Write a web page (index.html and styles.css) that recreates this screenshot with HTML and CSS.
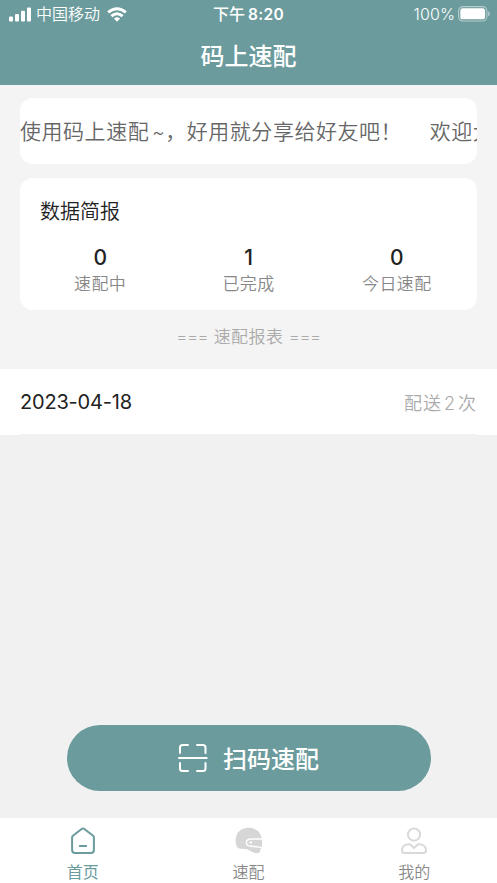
FILE: index.html
```
<!DOCTYPE html>
<html lang="zh-CN">
<head>
<meta charset="utf-8">
<meta name="viewport" content="width=device-width, initial-scale=1">
<title>码上速配</title>
<link rel="stylesheet" href="styles.css">
</head>
<body>
<div class="app">
  <header class="header">
    <div class="status">
      <div class="status-left">
        <svg class="signal" width="23" height="15" viewBox="0 0 23 15" fill="#fff"><rect x="0" y="9.5" width="4" height="5" rx="1"/><rect x="6" y="7" width="4" height="7.5" rx="1"/><rect x="12" y="3.8" width="4" height="10.7" rx="1"/><rect x="18" y="0.5" width="4" height="14" rx="1"/></svg>
        <span class="carrier">中国移动</span>
        <svg class="wifi" width="20" height="15" viewBox="0 0 20 15" fill="none" stroke="#fff" stroke-width="3"><path d="M1.2 5.4Q10-2 18.8 5.4"/><path d="M4.4 9.2Q10 4.4 15.6 9.2"/><path d="M10 14.7 6.9 11.6Q10 9 13.1 11.6Z" fill="#fff" stroke="none"/></svg>
      </div>
      <div class="clock"><span>下午</span><span class="time">8:20</span></div>
      <div class="status-right">
        <span class="percent">100%</span>
        <svg class="battery" width="32" height="16" viewBox="0 0 32 16"><rect x=".6" y=".6" width="28.3" height="14.4" rx="4.3" fill="none" stroke="#fff" stroke-opacity=".5" stroke-width="1.1"/><rect x="2.3" y="2.3" width="24.8" height="11" rx="2.6" fill="#fff"/><path d="M30.2 5.3Q31.8 6 31.8 7.8T30.2 10.3Z" fill="#fff" fill-opacity=".55"/></svg>
      </div>
    </div>
    <h1 class="title">码上速配</h1>
  </header>
  <main class="main">
    <section class="notice">
      <span>使用码上速配<span class="tilde">~</span>，好用就分享给好友吧！</span><span>欢迎大</span>
    </section>
    <section class="summary">
      <h2 class="summary-title">数据简报</h2>
      <div class="stats">
        <div class="stat"><span class="value">0</span><span class="label">速配中</span></div>
        <div class="stat"><span class="value">1</span><span class="label">已完成</span></div>
        <div class="stat"><span class="value">0</span><span class="label">今日速配</span></div>
      </div>
    </section>
    <div class="report-title"><span class="rule">===</span><span>速配报表</span><span class="rule">===</span></div>
    <div class="record"><div class="record-row"><span class="date">2023-04-18</span><span class="count">配送<span class="num">2</span>次</span></div></div>
    <button class="scan">
      <svg width="30" height="30" viewBox="0 0 30 30" fill="none" stroke="#fff" stroke-width="2" stroke-linecap="round" stroke-linejoin="round"><path d="M2 10V4.5Q2 2 4.5 2H10M19 2H25Q27.5 2 27.5 4.5V10M2 20V25.5Q2 28 4.5 28H10M19 28H25Q27.5 28 27.5 25.5V20M1 15H28.7"/></svg>
      <span>扫码速配</span>
    </button>
  </main>
  <nav class="tabs">
    <a class="tab active">
      <svg width="28" height="28" viewBox="0 0 28 28" fill="none" stroke="#6b9b9d" stroke-width="2" stroke-linejoin="round" stroke-linecap="round"><path d="M3.1 10.4Q3.1 9.5 3.9 8.8L12.6 2Q14 1 15.4 2L24.1 8.8Q24.9 9.5 24.9 10.4V23Q24.9 26 21.9 26H6.1Q3.1 26 3.1 23ZM10.8 19H17.2"/></svg>
      <span>首页</span>
    </a>
    <a class="tab">
      <svg width="28" height="28" viewBox="0 0 28 28"><path d="M2.2 20.5C-1 13 .6 6 6.5 2.5C13.5-1 23.5.6 26.3 9.4L27 12V20.8L25.6 21.5Q25.6 26.4 21.8 26.3C17.4 26.2 15.6 23.2 11.8 22.3C8.4 21.5 4.8 22.4 2.2 20.5Z" fill="#d6d6d6"/><path d="M28 12H16C10 12 10 18.6 15 19L28 20.6" fill="none" stroke="#fff" stroke-width="1.4"/><circle cx="15.8" cy="15.5" r="1.3" fill="#fff"/></svg>
      <span>速配</span>
    </a>
    <a class="tab">
      <svg width="28" height="28" viewBox="0 0 28 28" fill="none" stroke="#d9d9d9" stroke-width="2" stroke-linejoin="round"><circle cx="14" cy="7.6" r="6.1"/><path d="M9 17.2Q10 17.2 10.8 18L14 20.9L17.2 18Q18 17.2 19 17.2C23.3 17.2 26 20 26 23.6Q26 26 23.6 26H4.4Q2 26 2 23.6C2 20 4.7 17.2 9 17.2Z"/></svg>
      <span>我的</span>
    </a>
  </nav>
</div>
</body>
</html>
```
FILE: styles.css
```
* { box-sizing: border-box; }
body {
  margin: 0;
  font-family: Inter, "Noto Sans CJK SC", sans-serif;
  color: #222;
  background: #f1f1f1;
}
h1, h2 { margin: 0; font-weight: 500; }
svg { display: block; flex: none; }
.app { height: 883px; display: flex; flex-direction: column; overflow: hidden; }
.header { height: 85px; background: #6b9b9d; color: #fff; flex: none; }
.status {
  height: 27px;
  display: grid;
  grid-template-columns: 1fr auto 1fr;
  align-items: center;
  padding: 0 7px 0 9px;
  font-size: 16px;
  line-height: 27px;
}
.status-left, .status-right { display: flex; align-items: center; }
.carrier { margin: 1px 7px 0 4px; font-weight: 350; }
.status-right { justify-content: flex-end; gap: 3px; }
.percent { font-weight: 350; letter-spacing: .1px; padding-top: 1px; }
.clock { display: flex; gap: 3px; font-weight: 500; margin-right: 2px; padding-top: 1px; }
.time { font-weight: 600; font-size: 15.5px; letter-spacing: .35px; }
.title { text-align: center; font-size: 24px; line-height: 58px; padding-top: 1px; }
.main { flex: 1; display: flex; flex-direction: column; padding-top: 13px; background: linear-gradient(#f4f4f4 284px, #f1f1f1 350px); }
.notice {
  height: 66px;
  margin: 0 20px;
  border-radius: 13px;
  background: #fff;
  overflow: hidden;
  display: flex;
  gap: 27.5px;
  white-space: nowrap;
  font-size: 21px;
  font-weight: 350;
  letter-spacing: .54px;
  line-height: 68px;
  color: #666;
}
.tilde { margin: 0 0 0 3px; font-size: 19px; }
.summary { height: 132px; margin: 14px 20px 0; border-radius: 13px; background: #fff; padding: 19px 0 0; }
.summary-title { margin-left: 20px; font-size: 20px; font-weight: 350; line-height: 30px; }
.stats { display: flex; padding: 18px 6px 0; }
.stat { flex: 1; display: flex; flex-direction: column; align-items: center; }
.value { font-size: 21px; line-height: 25px; font-weight: 500; }
.label { font-size: 17px; font-weight: 350; letter-spacing: .4px; line-height: 28px; color: #888; }
.report-title { height: 59px; display: flex; justify-content: center; gap: 5.5px; font-size: 17px; font-weight: 350; letter-spacing: .4px; line-height: 55px; color: #aaa; }
.rule { letter-spacing: -.5px; }
.record { height: 66px; background: #fff; padding: 0 20px; }
.record-row { height: 66px; padding-top: 1px; border-bottom: 1px solid #f1f1f1; display: flex; align-items: center; justify-content: space-between; }
.date { font-size: 20px; letter-spacing: -.2px; }
.count { font-size: 18px; font-weight: 350; letter-spacing: 1px; color: #aaa; }
.num { margin: 0 2px; }
.scan {
  width: 364px;
  height: 66px;
  margin: auto auto 27px;
  border: 0;
  border-radius: 33px;
  background: #6b9b9d;
  color: #fff;
  display: flex;
  align-items: center;
  justify-content: center;
  gap: 15px;
  font: 500 24px/66px Inter, "Noto Sans CJK SC", sans-serif;
}
.scan span { padding-top: 3px; }
.tabs { height: 65px; flex: none; background: #fff; display: flex; }
.tab { flex: 1; display: flex; flex-direction: column; align-items: center; padding-top: 9px; font-size: 16px; font-weight: 350; color: #888; }
.tab span { line-height: 24px; margin-top: 5px; }
.tab.active { color: #6b9b9d; font-weight: 400; }
```
